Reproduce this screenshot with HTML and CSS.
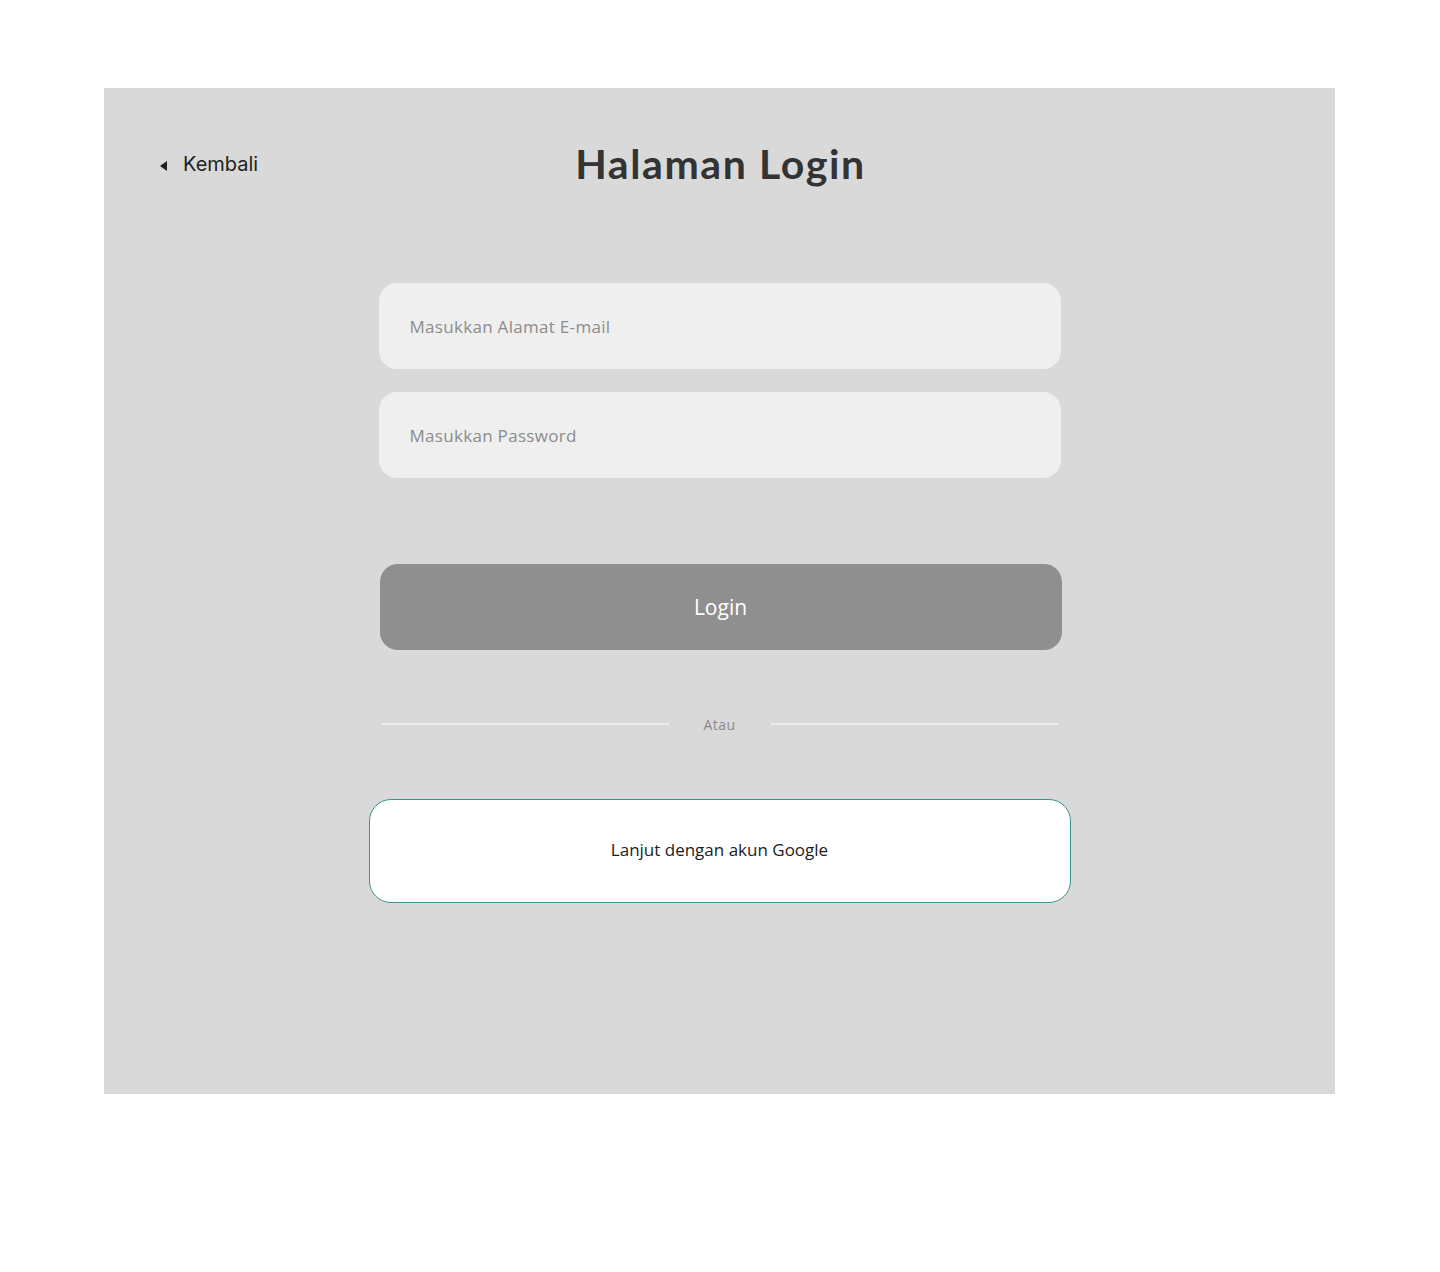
FILE: index.html
```html
<!DOCTYPE html>
<html lang="id">
<head>
<meta charset="utf-8">
<title>Halaman Login</title>
<link rel="stylesheet" href="styles.css">
</head>
<body>
<main class="panel">
  <header class="header">
    <a class="back" href="#">
      <svg class="back-icon" width="8" height="10" viewBox="0 0 8 10"><path d="M7 0 L7 10 L0 5 Z" fill="#1f1f1f"/></svg>
      <span>Kembali</span>
    </a>
    <h1 class="title">Halaman Login</h1>
    <div></div>
  </header>
  <form class="form" onsubmit="return false">
    <input class="field" type="email" placeholder="Masukkan Alamat E-mail">
    <input class="field field-second" type="password" placeholder="Masukkan Password">
    <button class="login" type="submit">Login</button>
    <div class="divider"><span class="line"></span><span class="or">Atau</span><span class="line"></span></div>
    <button class="google" type="button">Lanjut dengan akun Google</button>
  </form>
</main>
</body>
</html>
```
FILE: styles.css
```css
html, body {
  margin: 0;
  padding: 0;
  background: #ffffff;
}
body {
  padding: 88px 0 0 104px;
  height: 1272px;
  box-sizing: border-box;
  font-family: "Open Sans", "Noto Sans", sans-serif;
}
.panel {
  width: 1231px;
  height: 1006px;
  background: #d9d9d9;
  box-sizing: border-box;
  padding-top: 52px;
}
.header {
  display: grid;
  grid-template-columns: 1fr auto 1fr;
  align-items: center;
  height: 48px;
}
.back {
  display: flex;
  align-items: center;
  gap: 15px;
  padding-left: 56px;
  color: #1f1f1f;
  text-decoration: none;
  font-family: Inter, "Liberation Sans", sans-serif;
  font-size: 20px;
}
.back-icon {
  margin-top: 4px;
}
.title {
  margin: 0 0 0 2px;
  font-family: Lato, "Liberation Sans", sans-serif;
  font-weight: 700;
  font-size: 41px;
  letter-spacing: 1.6px;
  line-height: 48px;
  color: #333333;
}
.form {
  display: flex;
  flex-direction: column;
  align-items: center;
  margin-top: 95px;
}
.field {
  width: 682px;
  height: 86px;
  box-sizing: border-box;
  border: none;
  border-radius: 18px;
  background: #efefef;
  padding: 0 31px;
  font-family: "Open Sans", sans-serif;
  font-size: 17px;
  letter-spacing: 0.3px;
  color: #333;
  outline: none;
}
.field::placeholder {
  color: #8c8c8c;
}
.field-second {
  margin-top: 23px;
}
.login {
  margin: 86px 0 0 2px;
  width: 682px;
  height: 86px;
  border: none;
  border-radius: 18px;
  background: #8f8f8f;
  color: #ffffff;
  font-family: "Open Sans", sans-serif;
  font-size: 21px;
  padding: 0;
}
.divider {
  margin-top: 64px;
  width: 678px;
  display: flex;
  align-items: center;
  height: 20px;
}
.line {
  flex: 1;
  height: 2px;
  background: #ebebeb;
}
.or {
  width: 102px;
  text-align: center;
  font-size: 14px;
  letter-spacing: 0.4px;
  color: #8a8a8a;
}
.google {
  margin-top: 65px;
  width: 702px;
  height: 104px;
  box-sizing: border-box;
  background: #ffffff;
  border: 1px solid #3b9691;
  border-radius: 22px;
  font-family: "Open Sans", sans-serif;
  font-size: 17px;
  color: #1c1c1c;
  padding: 0 0 4px;
}
```
